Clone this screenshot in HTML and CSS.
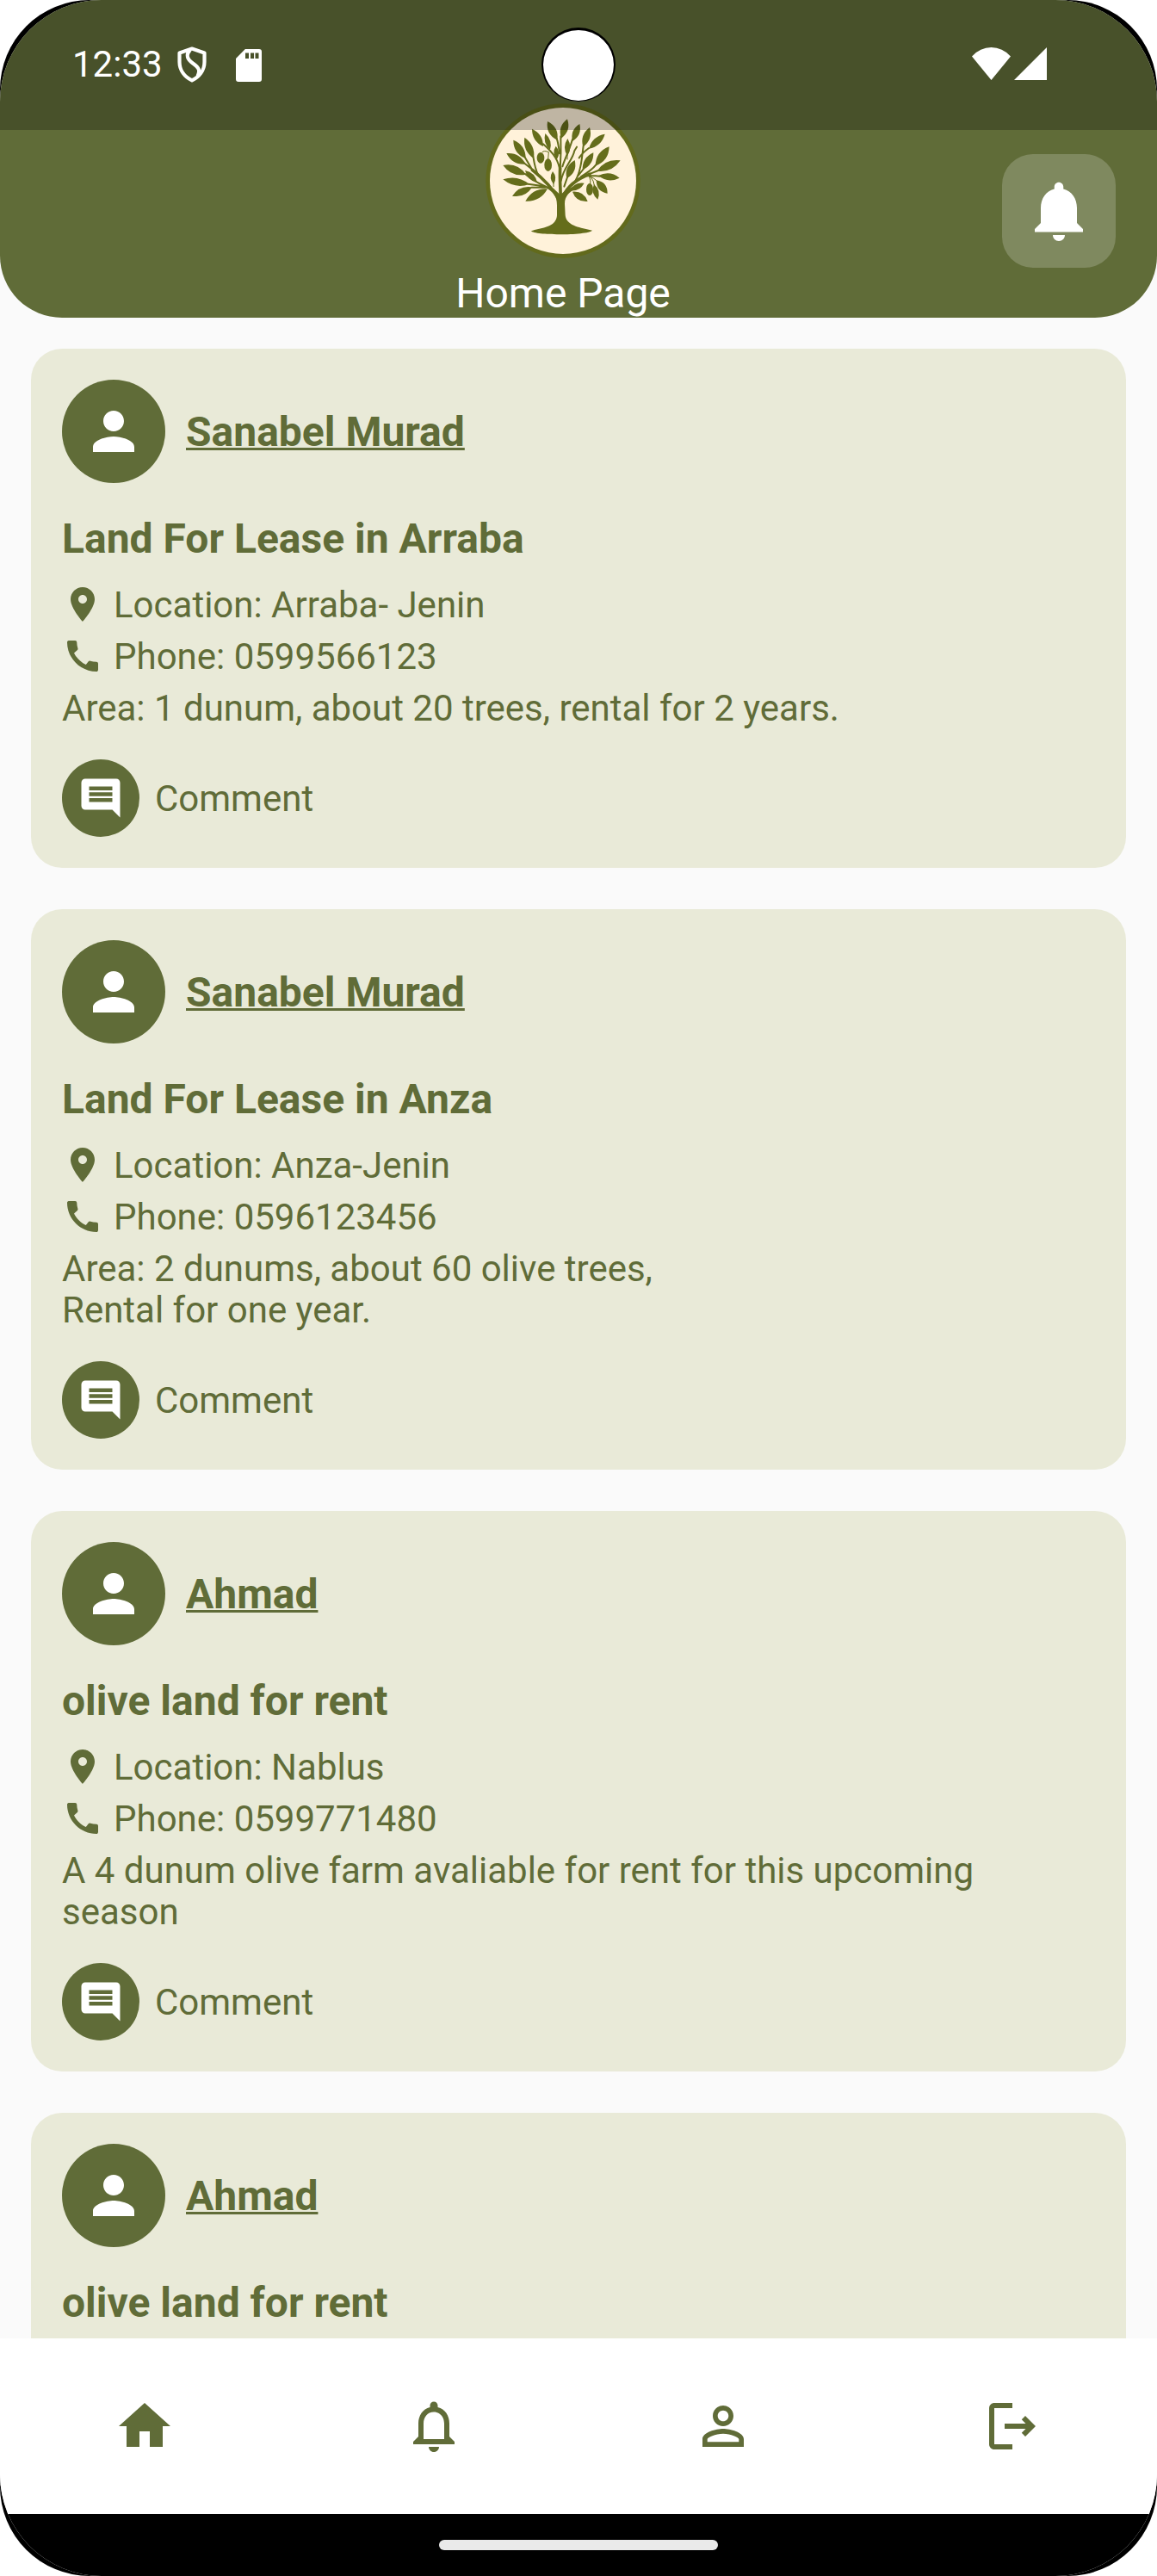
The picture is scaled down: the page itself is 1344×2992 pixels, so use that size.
FILE: index.html
```html
<!DOCTYPE html>
<html lang="en">
<head>
<meta charset="utf-8">
<title>Home Page</title>
<link rel="stylesheet" href="styles.css">
</head>
<body>
<svg class="sprite" width="0" height="0">
  <symbol id="i-person" viewBox="0 0 24 24"><path d="M12 12c2.21 0 4-1.79 4-4s-1.79-4-4-4-4 1.79-4 4 1.79 4 4 4zm0 2c-2.67 0-8 1.34-8 4v2h16v-2c0-2.66-5.33-4-8-4z"/></symbol>
  <symbol id="i-place" viewBox="0 0 24 24"><path d="M12 2C8.13 2 5 5.13 5 9c0 5.25 7 13 7 13s7-7.75 7-13c0-3.87-3.13-7-7-7zm0 9.5c-1.38 0-2.5-1.12-2.5-2.5s1.12-2.5 2.5-2.5 2.5 1.12 2.5 2.5-1.12 2.5-2.5 2.5z"/></symbol>
  <symbol id="i-phone" viewBox="0 0 24 24"><path d="M20.01 15.38c-1.23 0-2.42-.2-3.53-.56-.35-.12-.74-.03-1.01.24l-1.57 1.97c-2.83-1.35-5.48-3.9-6.89-6.83l1.95-1.66c.27-.28.35-.67.24-1.02-.37-1.11-.56-2.3-.56-3.53 0-.54-.45-.99-.99-.99H4.19C3.65 3 3 3.24 3 3.99 3 13.28 10.73 21 20.01 21c.71 0 .99-.63.99-1.18v-3.45c0-.54-.45-.99-.99-.99z"/></symbol>
  <symbol id="i-comment" viewBox="0 0 24 24"><path d="M21.99 4c0-1.1-.89-2-1.99-2H4c-1.1 0-2 .9-2 2v12c0 1.1.9 2 2 2h14l4 4-.01-18zM18 14H6v-2h12v2zm0-3H6V9h12v2zm0-3H6V6h12v2z"/></symbol>
</svg>

<div class="phone">
<div class="screen">
  <header class="header">
    <div class="header-side"></div>
    <div class="brand">
      <svg class="logo" viewBox="42 30 540 540">
        <circle cx="312" cy="300" r="269" fill="#626a1c"/>
        <circle cx="312" cy="300" r="255" fill="#fff2da"/>
        <g fill="#656d1b">
          <path d="M201 475C235 463 288 464 291 420L291 385C291 350 275 338 250 322L270 322C285 330 292 340 303 350C312 340 325 330 345 322L362 324C335 338 318 352 318 380L320 420C324 460 380 464 414 473C400 490 215 492 201 475z"/>
          <path d="M292 158q7-45-34-65q-7 45 34 65M306 152q35-26 21-67q-35 26-21 67M243 180q0-43-39-61q0 43 39 61M267 192q9-34-17-57q-9 34 17 57M182 222q0-47-43-64q0 47 43 64M210 222q7-46-32-73q-7 46 32 73M182 242q-21-42-67-38q21 42 67 38M183 278q-30-42-80-32q30 42 80 32M195 312q-41-34-92-17q41 34 92 17M205 322q-45-8-70 31q45 8 70-31M258 328q-52-3-77 43q52 3 77-43M222 306q-7-35-42-42q7 35 42 42M291 224q15-24-4-45q-15 24 4 45M279 312q15-23-3-45q-15 23 3 45M327 214q20-30 1-61q-20 30-1 61"/>
          <path d="M345 162q34-21 25-60q-34 21-25 60M382 182q35-26 23-68q-35 26-23 68M402 188q44-8 56-51q-44 8-56 51M425 248q47-17 48-67q-47 17-48 67M430 266q52 7 82-37q-52-7-82 37M435 282q34 28 74 8q-34-28-74-8M380 262q39-17 38-60q-39 17-38 60M325 292q38-22 28-64q-38 22-28 64M335 334q34 5 51-26q-34-5-51 26M345 338q13 37 53 34q-13-37-53-34M428 298q0 40 39 46q0-40-39-46M420 312q-13 31 13 53q13-31-13-53"/>
          <ellipse cx="234" cy="220" rx="13" ry="19"/>
          <ellipse cx="260" cy="245" rx="13" ry="22"/>
          <ellipse cx="405" cy="330" rx="12" ry="21"/>
        </g>
        <g fill="none" stroke="#656d1b" stroke-linecap="round">
          <path stroke-width="11" d="M304 370C303 320 300 290 302 255M296 362C275 325 240 290 205 262M312 355C330 315 370 290 405 277"/>
          <path stroke-width="6" d="M302 260C304 230 306 200 304 145M302 270C298 230 280 205 243 172M300 205C298 190 296 170 290 152M205 262L178 216M225 278C215 260 212 240 208 215M210 265L176 238M285 340C260 315 230 320 180 276M265 325C240 318 220 314 190 311M250 323L203 323M305 300C315 250 345 230 352 195L360 182M310 250C322 215 335 190 345 155M355 300C375 265 378 220 383 178M368 220C378 205 390 195 402 186M375 285C400 270 415 260 427 244M400 278L435 264M390 281C410 286 425 280 440 284M365 282L384 258M316 320L327 288"/>
          <path stroke-width="3" d="M240 200Q246 193 262 200L260 225M327 225L327 205M289 225L291 215M279 320L279 305M405 285Q420 290 430 300M408 286Q420 300 421 315M404 286Q410 300 407 312"/>
        </g>
      </svg>
      <h1 class="page-title">Home Page</h1>
    </div>
    <button class="bell-button" aria-label="Notifications">
      <svg viewBox="0 0 24 24"><path d="M12 22c1.1 0 2-.9 2-2h-4c0 1.1.89 2 2 2zm6-6v-5c0-3.07-1.64-5.64-4.5-6.32V4c0-.83-.67-1.5-1.5-1.5s-1.5.67-1.5 1.5v.68C7.63 5.36 6 7.92 6 11v5l-2 2v1h16v-1l-2-2z"/></svg>
    </button>
  </header>

  <main class="feed">
    <article class="card">
      <div class="author"><span class="avatar"><svg><use href="#i-person"/></svg></span><a class="name">Sanabel Murad</a></div>
      <h2 class="title">Land For Lease in Arraba</h2>
      <div class="details">
        <div class="row"><svg><use href="#i-place"/></svg><span class="text">Location: Arraba- Jenin</span></div>
        <div class="row"><svg><use href="#i-phone"/></svg><span class="text">Phone: 0599566123</span></div>
        <p class="text">Area: 1 dunum, about 20 trees, rental for 2 years.</p>
      </div>
      <div class="comment"><span class="comment-icon"><svg><use href="#i-comment"/></svg></span><span class="text">Comment</span></div>
    </article>

    <article class="card">
      <div class="author"><span class="avatar"><svg><use href="#i-person"/></svg></span><a class="name">Sanabel Murad</a></div>
      <h2 class="title">Land For Lease in Anza</h2>
      <div class="details">
        <div class="row"><svg><use href="#i-place"/></svg><span class="text">Location: Anza-Jenin</span></div>
        <div class="row"><svg><use href="#i-phone"/></svg><span class="text">Phone: 0596123456</span></div>
        <p class="text">Area: 2 dunums, about 60 olive trees,<br>Rental for one year.</p>
      </div>
      <div class="comment"><span class="comment-icon"><svg><use href="#i-comment"/></svg></span><span class="text">Comment</span></div>
    </article>

    <article class="card">
      <div class="author"><span class="avatar"><svg><use href="#i-person"/></svg></span><a class="name">Ahmad</a></div>
      <h2 class="title">olive land for rent</h2>
      <div class="details">
        <div class="row"><svg><use href="#i-place"/></svg><span class="text">Location: Nablus</span></div>
        <div class="row"><svg><use href="#i-phone"/></svg><span class="text">Phone: 0599771480</span></div>
        <p class="text">A 4 dunum olive farm avaliable for rent for this upcoming season</p>
      </div>
      <div class="comment"><span class="comment-icon"><svg><use href="#i-comment"/></svg></span><span class="text">Comment</span></div>
    </article>

    <article class="card card-last">
      <div class="author"><span class="avatar"><svg><use href="#i-person"/></svg></span><a class="name">Ahmad</a></div>
      <h2 class="title">olive land for rent</h2>
    </article>
  </main>

  <nav class="tabs">
    <a class="tab"><svg viewBox="0 0 24 24"><path d="M10 20v-6h4v6h5v-8h3L12 3 2 12h3v8z"/></svg></a>
    <a class="tab"><svg viewBox="0 0 24 24"><path d="M12 22c1.1 0 2-.9 2-2h-4c0 1.1.9 2 2 2zm6-6v-5c0-3.07-1.63-5.64-4.5-6.32V4c0-.83-.67-1.5-1.5-1.5s-1.5.67-1.5 1.5v.68C7.64 5.36 6 7.92 6 11v5l-2 2v1h16v-1l-2-2zm-2 1H8v-6c0-2.48 1.51-4.5 4-4.5s4 2.02 4 4.5v6z"/></svg></a>
    <a class="tab"><svg viewBox="0 0 24 24"><path d="M12 5.9c1.16 0 2.1.94 2.1 2.1s-.94 2.1-2.1 2.1S9.9 9.16 9.9 8s.94-2.1 2.1-2.1m0 9c2.97 0 6.1 1.46 6.1 2.1v1.1H5.9V17c0-.64 3.13-2.1 6.1-2.1M12 4C9.79 4 8 5.79 8 8s1.79 4 4 4 4-1.79 4-4-1.79-4-4-4zm0 9c-2.67 0-8 1.34-8 4v3h16v-3c0-2.66-5.33-4-8-4z"/></svg></a>
    <a class="tab"><svg viewBox="0 0 24 24"><path d="M17 8l-1.41 1.41L17.17 11H9v2h8.17l-1.58 1.58L17 16l4-4-4-4zM5 5h7V3H5c-1.1 0-2 .9-2 2v14c0 1.1.9 2 2 2h7v-2H5V5z"/></svg></a>
  </nav>
  <div class="system-bar"><span class="home-indicator"></span></div>

  <div class="status-bar">
    <div class="status-left">
      <span class="clock">12:33</span>
      <svg class="shield" viewBox="0 0 34 42"><path d="M17 2.600L31.500 7.400V18C31.500 28 25 35.500 17 39.400C9 35.500 2.500 28 2.500 18V7.400zM15 4C9 10 12 15 18 19.500C25 24.500 27 27.500 23.500 34.500" fill="none" stroke="#fff" stroke-width="4.200" stroke-linejoin="round"/></svg>
      <svg class="sd" viewBox="0 0 30 38"><path fill-rule="evenodd" d="M10.800 0H27a3 3 0 0 1 3 3V35a3 3 0 0 1-3 3H3a3 3 0 0 1-3-3V11zM11 4.500V11h4V4.500zM17 4.500V11h4V4.500zM22.500 4.500V11h4V4.500z"/></svg>
    </div>
    <div class="status-right">
      <svg class="wifi" viewBox="0 0 45 38"><path d="M0 10.500Q9.500 0 22.500 0T45 10.500L22.500 38z"/></svg>
      <svg class="signal" viewBox="0 0 38 38"><path d="M38 0V38H0z"/></svg>
    </div>
  </div>
  <span class="camera"></span>
</div>
</div>
</body>
</html>
```
FILE: styles.css
```css
* { box-sizing: border-box; margin: 0; padding: 0; }

body {
  background: #fff;
  font-family: Roboto, "Liberation Sans", sans-serif;
  color: #606c38;
}

svg { display: block; fill: currentColor; }
.sprite { position: absolute; }

.phone {
  width: 1344px;
  height: 2992px;
  background: #000;
  border-radius: 104px;
  overflow: hidden;
}

.screen {
  position: relative;
  display: flex;
  flex-direction: column;
  height: 100%;
  background: #fafafa;
  border-radius: 118px;
  overflow: hidden;
}

/* Header */
.header {
  flex: none;
  display: flex;
  align-items: center;
  justify-content: space-between;
  height: 369px;
  padding: 120px 48px 0;
  background: #606c38;
  border-radius: 0 0 72px 72px;
  color: #fff;
}
.header-side { width: 96px; }
.brand {
  display: flex;
  flex-direction: column;
  align-items: center;
  gap: 12px;
}
.logo { width: 180px; height: 180px; }
.page-title { font-size: 48px; font-weight: 400; line-height: 57px; }
.bell-button {
  display: grid;
  place-items: center;
  width: 132px;
  height: 132px;
  border: 0;
  border-radius: 36px;
  background: rgba(255, 255, 255, 0.2);
  color: #fff;
}
.bell-button svg { width: 84px; height: 84px; }

/* Feed */
.feed {
  flex: 1;
  min-height: 0;
  overflow: hidden;
  display: flex;
  flex-direction: column;
  gap: 48px;
  padding: 36px 36px 0;
}
.card {
  flex: none;
  display: flex;
  flex-direction: column;
  gap: 36px;
  padding: 36px;
  border-radius: 36px;
  background: #e9ead8;
}
.card-last { height: 603px; }
.author { display: flex; align-items: center; gap: 24px; }
.avatar, .comment-icon {
  display: grid;
  place-items: center;
  border-radius: 50%;
  background: #606c38;
  color: #fff;
}
.avatar { width: 120px; height: 120px; }
.avatar svg { width: 72px; height: 72px; }
.name {
  font-size: 48px;
  font-weight: 700;
  line-height: 57px;
  text-decoration: underline;
  text-decoration-thickness: 3px;
  text-decoration-skip-ink: none;
  text-underline-offset: 2px;
}
.title { font-size: 48px; font-weight: 700; line-height: 57px; }
.details {
  display: flex;
  flex-direction: column;
  gap: 12px;
  margin-top: -12px;
}
.text {
  font-size: 42px;
  line-height: 48px;
  transform: translateY(1px);
}
.row { display: flex; gap: 12px; }
.row svg { width: 48px; height: 48px; }
.comment { display: flex; align-items: center; gap: 18px; }
.comment-icon { width: 90px; height: 90px; }
.comment-icon svg { width: 54px; height: 54px; }

/* Bottom navigation */
.tabs {
  flex: none;
  display: flex;
  align-items: center;
  height: 204px;
  background: #fff;
}
.tab { flex: 1; display: flex; justify-content: center; }
.tab svg { width: 72px; height: 72px; }
.system-bar {
  flex: none;
  display: flex;
  justify-content: center;
  height: 72px;
  padding-top: 30px;
  background: #000;
}
.home-indicator {
  width: 324px;
  height: 12px;
  border-radius: 6px;
  background: #eaeaea;
}

/* Translucent status bar drawn over the header */
.status-bar {
  position: absolute;
  inset: 0 0 auto 0;
  display: flex;
  justify-content: space-between;
  height: 151px;
  padding: 50px 128px 0 84px;
  background: rgba(0, 0, 0, 0.25);
  color: #fff;
}
.status-left { display: flex; align-items: flex-start; }
.clock { width: 122px; font-size: 42px; line-height: 50px; }
.shield { width: 34px; height: 42px; margin: 4px 34px 0 0; }
.sd { width: 30px; height: 38px; margin-top: 7px; }
.status-right { display: flex; gap: 4px; margin-top: 5px; }
.wifi { width: 45px; height: 38px; }
.signal { width: 38px; height: 38px; }
.camera {
  position: absolute;
  top: 32px;
  left: 629px;
  width: 86px;
  height: 86px;
  border: solid #000;
  border-width: 3px 2px 1px 2px;
  border-radius: 50%;
  background: #fff;
}
```
